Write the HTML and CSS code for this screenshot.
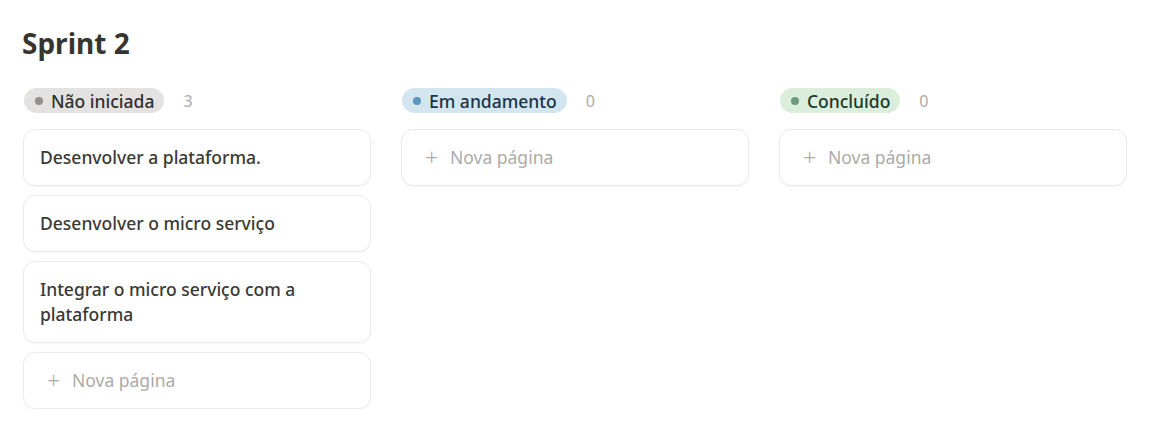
FILE: index.html
```html
<!DOCTYPE html>
<html lang="pt-BR">
<head>
<meta charset="utf-8">
<link rel="stylesheet" href="styles.css">
</head>
<body>
<div class="page">
  <h1 class="title">Sprint 2</h1>
  <div class="board">
    <section class="column">
      <div class="group-head">
        <span class="pill pill-gray"><span class="dot"></span>Não iniciada</span>
        <span class="count">3</span>
      </div>
      <div class="cards">
        <div class="card">Desenvolver a plataforma.</div>
        <div class="card">Desenvolver o micro serviço</div>
        <div class="card">Integrar o micro serviço com a plataforma</div>
        <div class="card new"><span class="plus">+</span>Nova página</div>
      </div>
    </section>
    <section class="column">
      <div class="group-head">
        <span class="pill pill-blue"><span class="dot"></span>Em andamento</span>
        <span class="count">0</span>
      </div>
      <div class="cards">
        <div class="card new"><span class="plus">+</span>Nova página</div>
      </div>
    </section>
    <section class="column">
      <div class="group-head">
        <span class="pill pill-green"><span class="dot"></span>Concluído</span>
        <span class="count">0</span>
      </div>
      <div class="cards">
        <div class="card new"><span class="plus">+</span>Nova página</div>
      </div>
    </section>
  </div>
</div>
</body>
</html>
```
FILE: styles.css
```css
* { box-sizing: border-box; }
html, body { margin: 0; padding: 0; background: #ffffff; }
body {
  font-family: "Noto Sans", "Open Sans", sans-serif;
  color: #37352f;
}
.page {
  padding: 23px 0 0 23px;
}
.title {
  margin: 0 0 0 -1px;
  font-size: 28px;
  line-height: 40px;
  font-weight: 700;
  color: #37352f;
}
.board {
  display: flex;
  gap: 30px;
  margin-top: 25px;
}
.column {
  width: 348px;
  display: flex;
  flex-direction: column;
}
.group-head {
  display: flex;
  align-items: center;
  height: 25px;
  margin-bottom: 16px;
}
.pill {
  display: inline-flex;
  align-items: center;
  height: 25px;
  padding: 0 10px 0 11px;
  border-radius: 13px;
  font-size: 17.5px;
  font-weight: 500;
  margin-left: 1px;
}
.pill .dot {
  width: 8px;
  height: 8px;
  border-radius: 50%;
  margin-right: 8px;
}
.pill-gray { background: #e3e2e0; color: #32302c; }
.pill-gray .dot { background: #91918e; }
.pill-blue { background: #d3e5ef; color: #183347; }
.pill-blue .dot { background: #5b97bd; }
.pill-green { background: #dbeddb; color: #1c3829; }
.pill-green .dot { background: #6c9b7d; }
.count {
  margin-left: 19px;
  font-size: 16px;
  color: #acaba8;
}
.cards {
  display: flex;
  flex-direction: column;
  gap: 9px;
}
.card {
  border: 1px solid #ebebea;
  border-radius: 12px;
  background: #fff;
  box-shadow: 0 1px 2px rgba(15, 15, 15, 0.04);
  padding: 15px 40px 15px 16px;
  font-size: 17.5px;
  line-height: 25px;
  font-weight: 500;
  color: #3a3935;
}
.card.new {
  display: flex;
  align-items: center;
  padding-left: 23px;
  font-weight: 400;
  color: #acaba8;
}
.plus {
  font-size: 23px;
  font-weight: 300;
  width: 14px;
  margin-right: 11px;
  line-height: 25px;
}
```
